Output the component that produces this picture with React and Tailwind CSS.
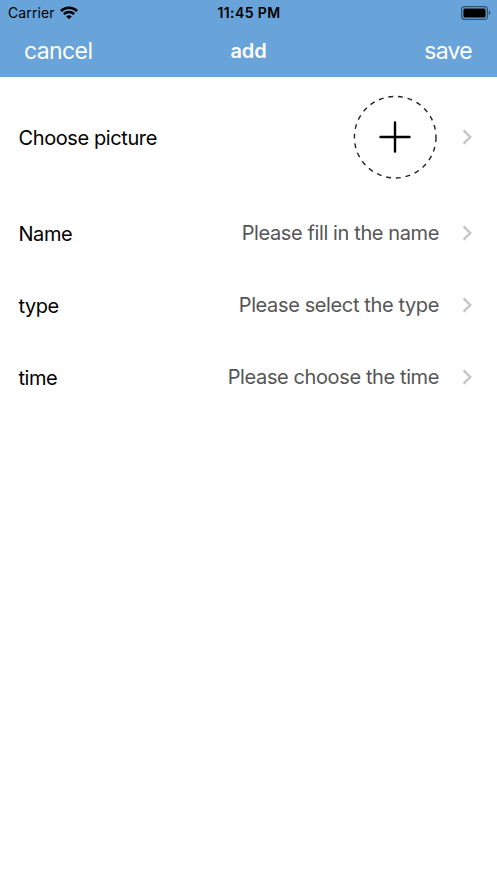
import React from "react"

const fields = [
  { label: "Name", hint: "Please fill in the name", hintStyle: "tracking-[-0.39px]" },
  { label: "type", hint: "Please select the type", hintStyle: "tracking-[-0.38px]" },
  { label: "time", hint: "Please choose the time", hintStyle: "tracking-[-0.39px]" },
]

function WifiIcon() {
  return (
    <svg width="18" height="14" viewBox="0 0 18 14" fill="none" stroke="#000" strokeWidth="2.5">
      <path d="M0.9 5a11.5 11.5 0 0 1 16.2 0" />
      <path d="M3.9 8.2a7.3 7.3 0 0 1 10.2 0" />
      <path d="M9 13.3L6.2 10.5a4 4 0 0 1 5.6 0z" fill="#000" stroke="none" />
    </svg>
  )
}

function BatteryIcon() {
  return (
    <svg width="30" height="14" viewBox="0 0 30 14">
      <rect x="0.6" y="0.6" width="25.8" height="12.8" rx="3.2" fill="none" stroke="#000" strokeOpacity="0.5" strokeWidth="1.2" />
      <rect x="2.4" y="2.4" width="22.2" height="9.2" rx="1.6" fill="#000" />
      <path d="M27.8 4.8c1.9 0.6 1.9 3.8 0 4.4z" fill="#000" fillOpacity="0.55" />
    </svg>
  )
}

function Chevron() {
  return (
    <svg width="10" height="16" viewBox="0 0 10 16" fill="none" stroke="#c4c4c6" strokeWidth="2.4">
      <path d="M1.6 1.4L8.3 8L1.6 14.6" />
    </svg>
  )
}

function AddPicture() {
  return (
    <svg width="84" height="84" viewBox="0 0 84 84" fill="none">
      <circle cx="42.2" cy="42.2" r="40.8" stroke="#222" strokeWidth="1.4" strokeDasharray="4.87 4.87" />
      <path d="M27.5 42h29M42 27.5v29" stroke="#000" strokeWidth="2.4" strokeLinecap="round" />
    </svg>
  )
}

function App() {
  return (
    <div className="flex min-h-screen w-full flex-col bg-white font-['Inter',sans-serif] text-black">
      <header className="h-[77px] bg-[#68a3da]">
        <div className="grid h-[25px] grid-cols-3 items-center pl-[8px] pr-[6px]">
          <div className="flex items-center gap-[5px]">
            <span className="text-[14px] tracking-[0.1px]">Carrier</span>
            <WifiIcon />
          </div>
          <span className="-ml-px text-center text-[14px] font-semibold tracking-[0.4px]">11:45 PM</span>
          <div className="flex justify-end">
            <BatteryIcon />
          </div>
        </div>
        <div className="grid h-[52px] grid-cols-3 items-center px-[24px] text-white">
          <span className="text-[23px] font-normal tracking-[-0.6px]">cancel</span>
          <span className="text-center text-[20px] font-semibold tracking-[-0.2px]">add</span>
          <span className="pr-px text-right text-[23px] font-normal tracking-[-0.7px]">save</span>
        </div>
      </header>

      <div className="flex h-[120px] items-center pl-[18.5px] pr-[25px]">
        <span className="flex-1 pt-px text-[20px] tracking-[-0.4px]">Choose picture</span>
        <div className="mr-[25px]">
          <AddPicture />
        </div>
        <Chevron />
      </div>

      {fields.map((field) => (
        <div key={field.label} className="flex h-[72px] items-center pl-[18.5px] pr-[25px]">
          <span className="flex-1 pt-px text-[20px] tracking-[-0.45px]">{field.label}</span>
          <span className={`mr-[23px] text-[20px] text-[#555] ${field.hintStyle}`}>{field.hint}</span>
          <Chevron />
        </div>
      ))}
    </div>
  )
}

export default App
